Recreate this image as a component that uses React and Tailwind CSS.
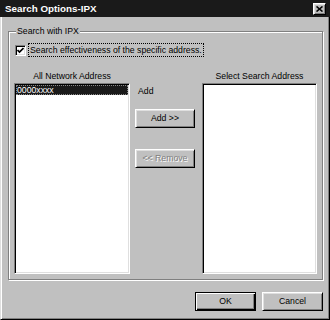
const raised =
  "border border-t-white border-l-white border-r-black border-b-black shadow-[inset_1px_1px_0_#dfdfdf,inset_-1px_-1px_0_#808080]";
const sunken =
  "border border-t-[#808080] border-l-[#808080] border-r-white border-b-white shadow-[inset_1px_1px_0_#000,inset_-1px_-1px_0_#dfdfdf]";

function Button({ label, disabled, isDefault, className }) {
  const frame = isDefault
    ? "border border-black shadow-[inset_1px_1px_0_#fff,inset_-1px_-1px_0_#000,inset_-2px_-2px_0_#808080]"
    : raised;
  return (
    <div
      className={`${frame} ${className} h-[19px] flex items-center justify-center bg-[#c0c0c0] ${
        disabled ? "text-[#808080] [text-shadow:1px_1px_0_#fff]" : "text-black"
      }`}
    >
      {label}
    </div>
  );
}

export default function App() {
  return (
    <div className="w-[330px] h-[320px] flex flex-col bg-[#c0c0c0] text-black text-[8.7px] leading-none font-['Liberation_Sans',Arial,sans-serif]">
      {/* title bar */}
      <div className="h-[17px] shrink-0 bg-[#1a1a1a] flex items-center justify-between pl-[5px] pr-[4px]">
        <span className="text-white font-bold text-[9.8px]">Search Options-IPX</span>
        <div className={`${raised} w-[13px] h-[12px] bg-[#c0c0c0] flex items-center justify-center`}>
          <svg width="7" height="6" viewBox="0 0 7 6">
            <path d="M0.5 0.5 L6.5 5.5 M6.5 0.5 L0.5 5.5" stroke="#000" strokeWidth="1.6" />
          </svg>
        </div>
      </div>

      {/* body */}
      <div className="flex-1 flex flex-col pl-[7px] pr-[6px] pt-[14px] border-l border-r border-b border-l-[#dfdfdf] border-r-black border-b-black shadow-[inset_1px_0_0_#fff,inset_-1px_-1px_0_#808080]">
        <div className="relative border border-[#808080] shadow-[inset_1px_1px_0_#fff,1px_1px_0_#fff] pl-[5px] pr-[5px] pt-[11px] pb-[5px]">
          <span className="absolute left-[7px] top-[-6px] bg-[#c0c0c0] px-[1px] h-[11px] flex items-center">
            Search with IPX
          </span>

          <div className="flex items-center ml-[1px]">
            <div className={`${sunken} w-[11px] h-[11px] bg-white flex items-center justify-center`}>
              <svg width="7" height="7" viewBox="0 0 7 7">
                <path d="M0.5 3 L2.5 5 L6.5 1" fill="none" stroke="#000" strokeWidth="1.7" />
              </svg>
            </div>
            <div className="ml-[2px] h-[14px] flex items-center px-[1px] border border-dotted border-black">
              Search effectiveness of the specific address.
            </div>
          </div>

          <div className="flex mt-[13px]">
            <div className="w-[116px] flex flex-col">
              <div className="h-[12px] flex items-center justify-center">All Network Address</div>
              <div className={`${sunken} mt-[1px] h-[191px] bg-white p-[1px]`}>
                <div className="h-[10px] flex items-center bg-[#1a1a1a] text-white pl-[1px] outline outline-1 outline-dotted outline-[#888] -outline-offset-1">
                  0000xxxx
                </div>
              </div>
            </div>

            <div className="w-[60px] ml-[5px] flex flex-col pt-[15px]">
              <div className="h-[12px] flex items-center pl-[3px]">Add</div>
              <Button label="Add >>" className="mt-[12px] w-[60px]" />
              <Button label="<< Remove" disabled className="mt-[21px] w-[60px]" />
            </div>

            <div className="w-[115px] ml-[7px] flex flex-col">
              <div className="h-[12px] flex items-center justify-center">Select Search Address</div>
              <div className={`${sunken} mt-[1px] h-[191px] bg-white`} />
            </div>
          </div>
        </div>

        <div className="flex justify-end gap-[6px] mt-[12px]">
          <Button label="OK" isDefault className="w-[61px]" />
          <Button label="Cancel" className="w-[61px]" />
        </div>
      </div>
    </div>
  );
}
